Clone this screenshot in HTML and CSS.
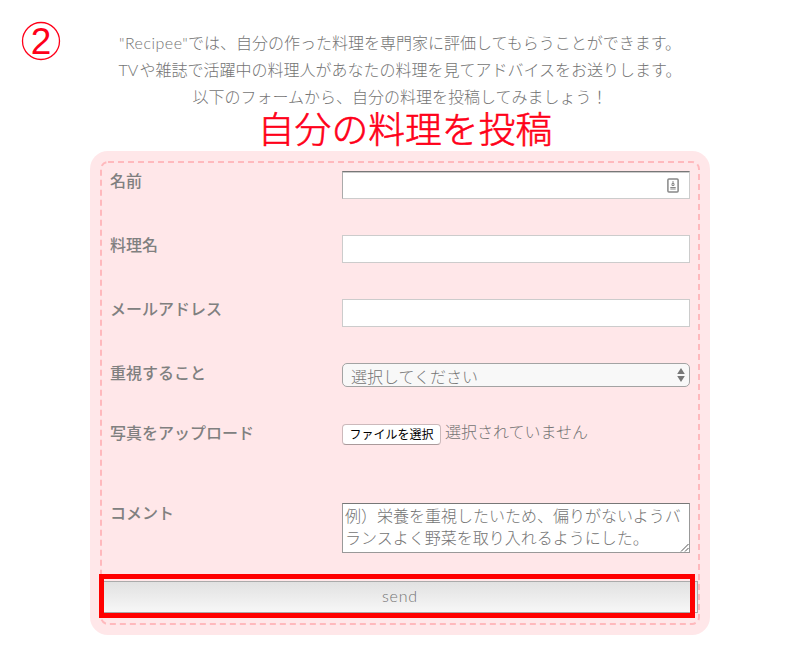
FILE: index.html
```html
<!DOCTYPE html>
<html lang="ja">
<head>
<meta charset="utf-8">
<title>Recipee</title>
<link rel="stylesheet" href="styles.css">
</head>
<body>
<svg class="step" viewBox="0 0 40 40" role="img" aria-label="2"><circle cx="20" cy="20" r="18.5"/><text x="20" y="33" text-anchor="middle">2</text></svg>
<main class="page">
  <div class="intro">
    <p><span class="latin brand">"Recipee"</span>では、自分の作った料理を専門家に評価してもらうことができます。</p>
    <p><span class="latin tv">TV</span>や雑誌で活躍中の料理人があなたの料理を見てアドバイスをお送りします。</p>
    <p>以下のフォームから、自分の料理を投稿してみましょう！</p>
  </div>
  <h1 class="title">自分の料理を投稿</h1>
  <form class="card">
    <svg class="dashes" width="600" height="464"><rect x="1" y="1" width="598" height="462" rx="7"/></svg>
    <div class="fields">
      <label>名前</label>
      <div class="input focused">
        <svg class="contact" viewBox="0 0 12 16"><rect x=".9" y=".9" width="10.2" height="13.2" rx="1"/><path d="M6 3v3M5 5.5h2v2H5zM3.3 9.5h5.4M3.3 11h5.4"/></svg>
      </div>
      <label>料理名</label>
      <div class="input"></div>
      <label>メールアドレス</label>
      <div class="input"></div>
      <label>重視すること</label>
      <div class="select"><span>選択してください</span><svg viewBox="0 0 8 16"><path d="M4 1l3.8 6H.2zM4 15l3.8-6H.2z"/></svg></div>
      <label>写真をアップロード</label>
      <div class="upload"><button type="button">ファイルを選択</button><span>選択されていません</span></div>
      <label>コメント</label>
      <div class="comment">例）栄養を重視したいため、偏りがないようバ<br>ランスよく野菜を取り入れるようにした。<svg viewBox="0 0 9 9"><path d="M1 8.5L8.5 1M5 8.5L8.5 5"/></svg></div>
    </div>
    <button class="send" type="button">send</button>
    <div class="highlight"></div>
  </form>
</main>
</body>
</html>
```

FILE: styles.css
```css
* { box-sizing: border-box; }
body {
  margin: 0;
  background: #fff;
  color: #747474;
  font: 300 16px/27px "Noto Sans CJK JP", sans-serif;
}
p, h1 { margin: 0; white-space: nowrap; }
.page { width: 620px; margin-left: 90px; padding-top: 29px; }
.intro { text-align: center; height: 80px; }
.latin { display: inline-block; text-align: left; font-family: Lato, sans-serif; font-weight: 300; }
.brand { width: 69px; letter-spacing: .5px; }
.tv { width: 21px; }
.title {
  height: 42px;
  margin-left: 10px;
  color: #ff0019;
  font-size: 36.8px;
  font-weight: 300;
  line-height: 36px;
  text-align: center;
  -webkit-text-stroke: .6px #ff0019;
}
.step { position: absolute; left: 21px; top: 21px; width: 40px; height: 40px; }
.step circle { fill: none; stroke: #ff0019; stroke-width: 1.3; }
.step text { fill: #ff0019; font: 400 37px "Liberation Sans", sans-serif; }
.card {
  position: relative;
  height: 484px;
  padding: 20px 12px 0;
  border-radius: 18px;
  background: #ffe7e9;
}
.dashes { position: absolute; left: 10px; top: 10px; }
.dashes rect { fill: none; stroke: #ffb9bd; stroke-width: 2; stroke-dasharray: 6 4; }
.fields {
  display: grid;
  grid-template-columns: 232px 348px;
  grid-template-rows: 64px 64px 64px 60px 80px 78px;
  padding: 0 8px;
}
label { color: #808080; font-weight: 500; line-height: 18px; }
.input { height: 28px; border: 1px solid #ccc; background: #fff; }
.focused {
  display: flex;
  justify-content: flex-end;
  padding: 6px 10px 0;
  border-color: #777 #ccc #ccc #aaa;
  box-shadow: inset 0 1px 0 #ccc;
}
.contact { width: 12px; height: 16px; }
.contact rect, .contact path { fill: none; stroke: #888; stroke-width: 1.5; }
.contact path { stroke-width: 1; }
.select {
  display: flex;
  align-items: center;
  justify-content: space-between;
  height: 24px;
  padding: 2px 4px 0 8px;
  border: 1px solid #a3a3a3;
  border-radius: 5px;
  background: #f8f8f8;
}
.select svg { width: 8px; height: 16px; margin-top: -2px; fill: #777; }
.upload { display: flex; align-items: flex-start; gap: 4px; }
.upload button {
  width: 99px;
  height: 21px;
  margin-top: 1px;
  padding: 0 0 2px;
  border: 1px solid #ccb9bb;
  border-bottom-color: #aa9a9b;
  border-radius: 4px;
  background: #fff;
  color: #000;
  font: 400 12px/17px "Noto Sans CJK JP", sans-serif;
}
.upload span { line-height: 16px; }
.comment {
  position: relative;
  height: 50px;
  padding: 0 2px;
  border: 1px solid #999;
  border-top-color: #777;
  background: #fff;
  line-height: 22px;
  white-space: nowrap;
}
.comment svg { position: absolute; right: 0; bottom: 0; width: 9px; height: 9px; fill: none; stroke: #555; }
.send {
  position: relative;
  display: block;
  width: 596px;
  height: 32px;
  padding: 0 0 3px;
  border: 1px solid #aaa;
  background: linear-gradient(#e1e1e1, #f7f7f7);
  color: #747474;
  font: 300 16px Lato, sans-serif;
  letter-spacing: .8px;
}
.highlight { position: absolute; left: 9px; top: 423px; width: 596px; height: 44px; border: 5px solid #f00; }
```
